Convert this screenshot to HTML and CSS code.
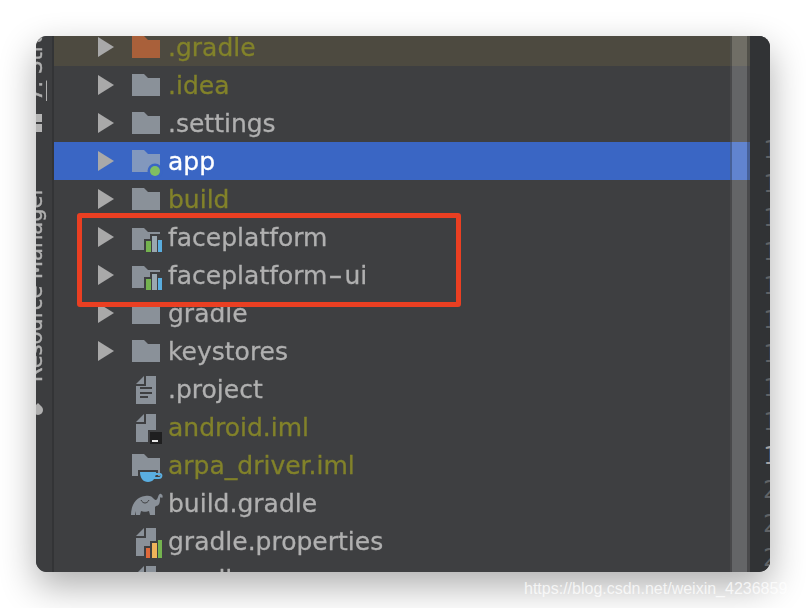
FILE: index.html
```html
<!DOCTYPE html>
<html lang="en">
<head>
<meta charset="UTF-8">
<meta name="viewport" content="width=device-width, initial-scale=1.0">
<title>Project tree</title>
<link rel="stylesheet" href="styles.css">
</head>
<body>

<svg class="defs" width="0" height="0">
    <defs>
        <path id="folder" d="M2 7H14L18 11H30V29H2Z"/>
        <g id="arrow"><path d="M0 0L16 10L0 20Z"/></g>
        <path id="file" d="M16 5H26V33H6V15H16Z"/>
        <path id="corner" d="M6 13L14 5V13Z"/>
    </defs>
</svg>

<div id="window">
    <div id="sidebar">
        <div class="sideLabel top"><span><u>7:</u> Structure</span></div>
        <div class="sideSquares"></div>
        <div class="sideLabel"><span>Resource Manager</span></div>
        <div class="sideDot"></div>
    </div>

    <div id="tree">
        <div class="row tinted">
            <svg class="arrow" viewBox="0 0 16 20"><use href="#arrow"/></svg>
            <svg class="icon orange" viewBox="0 0 36 36"><use href="#folder"/></svg>
            <span class="name olive">.gradle</span>
        </div>
        <div class="row">
            <svg class="arrow" viewBox="0 0 16 20"><use href="#arrow"/></svg>
            <svg class="icon" viewBox="0 0 36 36"><use href="#folder"/></svg>
            <span class="name olive">.idea</span>
        </div>
        <div class="row">
            <svg class="arrow" viewBox="0 0 16 20"><use href="#arrow"/></svg>
            <svg class="icon" viewBox="0 0 36 36"><use href="#folder"/></svg>
            <span class="name">.settings</span>
        </div>
        <div class="row selected">
            <svg class="arrow" viewBox="0 0 16 20"><use href="#arrow"/></svg>
            <svg class="icon" viewBox="0 0 36 36">
                <use href="#folder"/>
                <circle cx="25" cy="28" r="7.5" fill="#3a66c4"/>
                <circle cx="25" cy="28" r="5" fill="#7fbf62"/>
            </svg>
            <span class="name">app</span>
        </div>
        <div class="row">
            <svg class="arrow" viewBox="0 0 16 20"><use href="#arrow"/></svg>
            <svg class="icon" viewBox="0 0 36 36"><use href="#folder"/></svg>
            <span class="name olive">build</span>
        </div>
        <div class="row">
            <svg class="arrow" viewBox="0 0 16 20"><use href="#arrow"/></svg>
            <svg class="icon" viewBox="0 0 36 36">
                <path d="M2 9H14L18 13H30V31H2Z"/>
                <path d="M14 33V20H20V15H33V33Z" fill="#3e3f41"/>
                <rect x="16" y="22" width="5" height="11" fill="#74b34f"/>
                <rect x="22" y="17" width="5" height="16" fill="#9aa7b0"/>
                <rect x="28" y="21" width="4" height="12" fill="#5aaee0"/>
            </svg>
            <span class="name">faceplatform</span>
        </div>
        <div class="row">
            <svg class="arrow" viewBox="0 0 16 20"><use href="#arrow"/></svg>
            <svg class="icon" viewBox="0 0 36 36">
                <path d="M2 9H14L18 13H30V31H2Z"/>
                <path d="M14 33V20H20V15H33V33Z" fill="#3e3f41"/>
                <rect x="16" y="22" width="5" height="11" fill="#74b34f"/>
                <rect x="22" y="17" width="5" height="16" fill="#9aa7b0"/>
                <rect x="28" y="21" width="4" height="12" fill="#5aaee0"/>
            </svg>
            <span class="name">faceplatform<span class="dash">-</span>ui</span>
        </div>
        <div class="row">
            <svg class="arrow" viewBox="0 0 16 20"><use href="#arrow"/></svg>
            <svg class="icon" viewBox="0 0 36 36"><use href="#folder"/></svg>
            <span class="name">gradle</span>
        </div>
        <div class="row">
            <svg class="arrow" viewBox="0 0 16 20"><use href="#arrow"/></svg>
            <svg class="icon" viewBox="0 0 36 36"><use href="#folder"/></svg>
            <span class="name">keystores</span>
        </div>
        <div class="row">
            <span></span>
            <svg class="icon" viewBox="0 0 36 36">
                <use href="#file"/><use href="#corner"/>
                <path d="M10 16H22V18H10ZM10 21H22V23H10ZM10 25H18V27H10Z" fill="#3e3f41"/>
            </svg>
            <span class="name">.project</span>
        </div>
        <div class="row">
            <span></span>
            <svg class="icon" viewBox="0 0 36 36">
                <use href="#file"/><use href="#corner"/>
                <rect x="18" y="21" width="15" height="15" fill="#3e3f41"/>
                <rect x="20" y="23" width="12" height="12" fill="#1f1f20"/>
                <rect x="22" y="31" width="6" height="2" fill="#e8e8e8"/>
            </svg>
            <span class="name olive">android.iml</span>
        </div>
        <div class="row">
            <span></span>
            <svg class="icon" viewBox="0 0 36 36">
                <use href="#folder"/>
                <path d="M8 23H28V36H8Z" fill="#3e3f41"/>
                <path d="M10 25H26C26 31 23 35 18 35C13 35 10 31 10 25Z" fill="#5aaee0"/>
                <path d="M25 27H30C32 27 32 31 29 31H24" fill="none" stroke="#5aaee0" stroke-width="2"/>
            </svg>
            <span class="name olive">arpa_driver.iml</span>
        </div>
        <div class="row">
            <span></span>
            <svg class="icon" viewBox="0 0 36 36">
                <path d="M1 30C1 20 6 12 15 11C19 10 22 11 24 14C26 16 27 15 28 12C28.5 10 30 8 31 9C33 10 33 12 32 13C31 12 30 12 30 14C30 18 29 21 26 21L25 22V30H20L19 26C17 27 13 27 11 26L10 30H6V26L5 30Z"/>
                <path d="M11 15C13 19 17 19 19 15" fill="none" stroke="#3e3f41"/>
            </svg>
            <span class="name">build.gradle</span>
        </div>
        <div class="row">
            <span></span>
            <svg class="icon" viewBox="0 0 36 36">
                <use href="#file"/><use href="#corner"/>
                <path d="M14 36V23H20V18H26V15H33V36Z" fill="#3e3f41"/>
                <rect x="16" y="25" width="4" height="10" fill="#e0693a"/>
                <rect x="22" y="20" width="5" height="15" fill="#efb45a"/>
                <rect x="28" y="17" width="4" height="18" fill="#74b34f"/>
            </svg>
            <span class="name">gradle.properties</span>
        </div>
        <div class="row">
            <span></span>
            <svg class="icon" viewBox="0 0 36 36"><use href="#file"/><use href="#corner"/></svg>
            <span class="name">gradlew</span>
        </div>
    </div>

    <div id="gutter">
        <div>10</div><div>11</div><div>12</div><div>13</div><div>14</div>
        <div>15</div><div>16</div><div>17</div><div>18</div>
        <div class="current">19</div>
        <div>20</div><div>21</div><div>22</div>
    </div>

    <div id="scrollbar"></div>
    <div id="highlight"></div>
</div>

<div id="watermark">https://blog.csdn.net/weixin_4236859</div>

</body>
</html>
```

FILE: styles.css
```css
/* Page */
body {
    margin: 0;
    height: 608px;
    overflow: hidden;
    background: #fff;
    font-family: "DejaVu Sans", sans-serif;
}
.defs {
    position: absolute;
}

/* Window */
#window {
    position: relative;
    display: flex;
    width: 734px;
    height: 536px;
    margin: 36px 0 0 36px;
    overflow: hidden;
    border-radius: 11px;
    background: #3e3f41;
}
body::before {
    content: "";
    position: absolute;
    left: 36px;
    top: 36px;
    width: 734px;
    height: 536px;
    border-radius: 11px;
    box-shadow: 0 14px 36px rgba(0, 0, 0, 0.32);
}

/* Left tool strip */
#sidebar {
    flex: none;
    width: 16px;
    display: flex;
    flex-direction: column;
    align-items: flex-end;
    overflow: hidden;
    background: #3c3d3f;
    border-right: 2px solid #333436;
    color: #b0b0b0;
    font-size: 21px;
    -webkit-text-stroke: 0.4px currentColor;
}
.sideLabel {
    flex: none;
    display: flex;
    justify-content: flex-start;
    align-items: flex-end;
    width: 24px;
    height: 200px;
    margin: 50px 5px 0 0;
    writing-mode: vertical-rl;
    transform: rotate(180deg);
    white-space: nowrap;
    line-height: 24px;
}
.sideLabel.top {
    height: 65px;
    margin-top: 0;
    overflow: hidden;
}
.sideSquares {
    flex: none;
    align-self: flex-start;
    width: 6px;
    height: 18px;
    margin-top: 13px;
    background: linear-gradient(#b5b5b5 8px, transparent 8px, transparent 10px, #b5b5b5 10px);
}
.sideDot {
    flex: none;
    align-self: flex-start;
    width: 10px;
    height: 10px;
    margin: 23px 0 0 -3px;
    border-radius: 50% 0 50% 50%;
    transform: rotate(-45deg);
    background: #b0b0b0;
}

/* Tree */
#tree {
    flex: 1;
    margin-top: -8px;
}
.row {
    display: grid;
    grid-template-columns: 16px 36px auto;
    column-gap: 16px;
    align-items: center;
    justify-content: start;
    height: 38px;
    padding-left: 44px;
    color: #8a9199;
    fill: currentColor;
}
.row.tinted {
    background: #4d4a40;
}
.row.selected {
    background: #3a66c4;
    color: #8298bd;
}
.arrow {
    width: 16px;
    height: 20px;
    fill: #a9a9a9;
}
.icon {
    width: 36px;
    height: 36px;
}
.icon.orange {
    fill: #a9603a;
}
.name {
    margin-left: -14px;
    font-size: 25px;
    color: #b0b0b0;
    white-space: nowrap;
    filter: blur(0.3px);
    -webkit-text-stroke: 0.3px currentColor;
}
.name.olive {
    color: #82822a;
}
.row.selected .name {
    color: #fff;
}
.dash {
    display: inline-block;
    margin: 0 4px;
    transform: scaleX(1.6);
}

/* Line numbers, cut by the window edge */
#gutter {
    flex: none;
    width: 20px;
    padding-top: 97px;
    background: #313335;
    color: #606366;
    font-family: "DejaVu Sans Mono", monospace;
    font-size: 24px;
    line-height: 34px;
    text-indent: 13px;
    white-space: nowrap;
}
#gutter .current {
    color: #a4a3a3;
}

/* Scrollbar lies over the rows */
#scrollbar {
    position: absolute;
    left: 694px;
    top: 0;
    bottom: 0;
    width: 15px;
    background: rgba(255, 255, 255, 0.2);
    border-left: 2px solid rgba(0, 0, 0, 0.27);
    border-right: 3px solid rgba(0, 0, 0, 0.27);
}

/* Red marker drawn on the screenshot */
#highlight {
    position: absolute;
    left: 41px;
    top: 177px;
    width: 374px;
    height: 84px;
    border: 5px solid #ea3f22;
    border-radius: 3px;
}

#watermark {
    position: absolute;
    left: 524px;
    top: 580px;
    font-family: "Liberation Sans", sans-serif;
    font-size: 16px;
    color: rgba(255, 255, 255, 0.75);
    white-space: nowrap;
}
```
